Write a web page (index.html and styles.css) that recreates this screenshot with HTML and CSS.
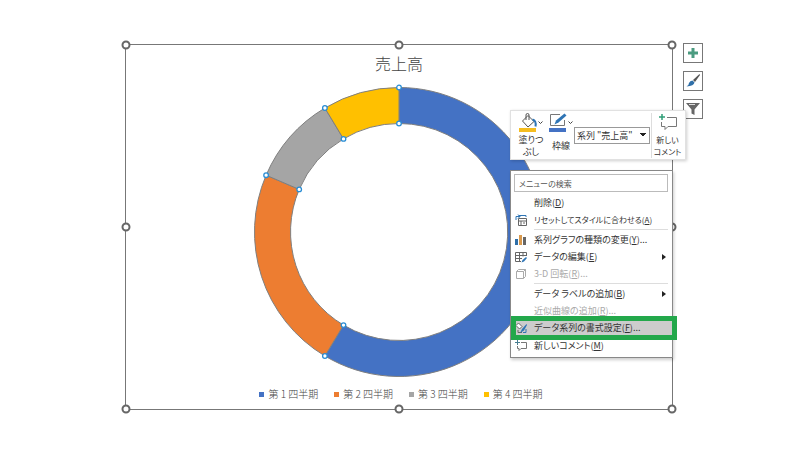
FILE: index.html
```
<!DOCTYPE html>
<html lang="ja">

<head>
    <meta charset="UTF-8">
    <meta name="viewport" content="width=device-width, initial-scale=1.0">
    <title>売上高</title>
    <link rel="stylesheet" href="styles.css">
</head>
<body>
    <main class="slide">
        <section class="chart">
            <h1 class="chart-title">売上高</h1>
            <svg class="donut" viewBox="0 0 290 290" role="img" aria-label="売上高">
                <g stroke="#7f7f7f" stroke-width="1">
                    <path fill="#4472c4" d="M145 .5A144.5 144.5 0 1 1 70.9 269L89.5 238.1A108.5 108.5 0 1 0 145 36.5Z"/>
                    <path fill="#ed7d31" d="M70.9 269A144.5 144.5 0 0 1 12.1 88.2L45.2 102.4A108.5 108.5 0 0 0 89.5 238.1Z"/>
                    <path fill="#a5a5a5" d="M12.1 88.2A144.5 144.5 0 0 1 70.9 21L89.5 51.9A108.5 108.5 0 0 0 45.2 102.4Z"/>
                    <path fill="#ffc000" d="M70.9 21A144.5 144.5 0 0 1 145 .5L145 36.5A108.5 108.5 0 0 0 89.5 51.9Z"/>
                </g>
                <g fill="#fff" stroke="#2a8dd4" stroke-width="1.3">
                    <circle cx="145" cy=".5" r="2.3"/>
                    <circle cx="145" cy="36.5" r="2.3"/>
                    <circle cx="70.9" cy="21" r="2.3"/>
                    <circle cx="89.5" cy="51.9" r="2.3"/>
                    <circle cx="12.1" cy="88.2" r="2.3"/>
                    <circle cx="45.2" cy="102.4" r="2.3"/>
                    <circle cx="89.5" cy="238.1" r="2.3"/>
                    <circle cx="70.9" cy="269" r="2.3"/>
                </g>
            </svg>
            <ul class="legend">
                <li class="q1">第 1 四半期</li>
                <li class="q2">第 2 四半期</li>
                <li class="q3">第 3 四半期</li>
                <li class="q4">第 4 四半期</li>
            </ul>

            <span class="handle top left"></span>
            <span class="handle top center"></span>
            <span class="handle top right"></span>
            <span class="handle middle left"></span>
            <span class="handle middle right"></span>
            <span class="handle bottom left"></span>
            <span class="handle bottom center"></span>
            <span class="handle bottom right"></span>

            <div class="popup">
                <div class="toolbar">
                    <button class="tool">
                        <svg width="26" height="19" viewBox="0 0 26 19" fill="none">
                            <path d="M4.500 8 10 2.500l6 6-6 5.500-5.500-6Z" fill="#fff" stroke="#555"/>
                            <path d="M8 7V2q0-1.500 1.500-1.500T11 2v5" stroke="#555"/>
                            <path d="M14.500 6.500q4 1 3 7" stroke="#2f75b5" stroke-width="2"/>
                            <path d="M1 15h17v4H1z" fill="#f5bd1f"/>
                            <path d="m20.500 8.500 2 2 2-2" stroke="#444"/>
                        </svg>
                        <span>塗りつ<br>ぶし</span>
                    </button>
                    <button class="tool">
                        <svg width="26" height="19" viewBox="0 0 26 19" fill="none">
                            <path d="M12 1.500H2.500v11h14V7" stroke="#777"/>
                            <path d="m6.500 11.500 1.500-4 8.500-7 2 2-8 7-4 2Z" fill="#2f75b5"/>
                            <path d="M1 15h17v4H1z" fill="#4472c4"/>
                            <path d="m20.500 8.500 2 2 2-2" stroke="#444"/>
                        </svg>
                        <span class="one-line">枠線</span>
                    </button>
                    <select class="series" aria-label="グラフ要素">
                        <option>系列 "売上高"</option>
                    </select>
                    <button class="tool comment">
                        <svg width="20" height="19" viewBox="0 0 20 19" fill="none">
                            <path d="M9 4.500h9.500v9H10l-3 3v-3H3.500V9" stroke="#777"/>
                            <path d="M4 1v6M1 4h6" stroke="#2f9e77" stroke-width="1.500"/>
                        </svg>
                        <span class="dense">新しい<br>コメント</span>
                    </button>
                </div>

                <div class="menu">
                    <input class="search dense" type="text" placeholder="メニューの検索" aria-label="メニューの検索">
                    <button class="item"><span class="label">削除(<u>D</u>)</span></button>
                    <button class="item">
                        <svg class="icon" viewBox="0 0 12 12" fill="none">
                            <path d="M3.500 4.500h8v7h-8zM3.500 7h8M6 7v4.500M8 9h2" stroke="#666"/>
                            <path d="M11 3V1.500H3.500M1 6V2.500h4M3 .5l2 2-2 2" stroke="#2f75b5"/>
                        </svg>
                        <span class="label dense">リセットしてスタイルに合わせる(<u>A</u>)</span>
                    </button>
                    <hr class="line">
                    <button class="item">
                        <svg class="icon" viewBox="0 0 12 12">
                            <path d="M0 5h3v6H0z" fill="#2f6fa8"/>
                            <path d="M4 1h3v10H4z" fill="#d99a4e"/>
                            <path d="M8 3h3v8H8z" fill="#666"/>
                        </svg>
                        <span class="label">系列グラフの種類の変更(<u>Y</u>)...</span>
                    </button>
                    <button class="item">
                        <svg class="icon" viewBox="0 0 12 12" fill="none">
                            <path d="M6 10.500H.5v-9h11V5M.5 4.500h11M.5 7.500H7M4.500 1.500v9M8 1.500v4" stroke="#666"/>
                            <path d="m6.500 11.500 1-2.500 3.500-3 1 1-3 3.500Z" fill="#2f75b5"/>
                        </svg>
                        <span class="label">データの編集(<u>E</u>)</span>
                        <span class="arrow"></span>
                    </button>
                    <button class="item" disabled>
                        <svg class="icon" viewBox="0 0 12 12" fill="none">
                            <path d="M1.500 3.500h7v7h-7zM1.500 3.500l2-2h7v7l-2 2M8.500 3.500l2-2" stroke="#aaa"/>
                        </svg>
                        <span class="label">3-D 回転(<u>R</u>)...</span>
                    </button>
                    <hr class="line">
                    <button class="item">
                        <span class="label">データ ラベルの追加(<u>B</u>)</span>
                        <span class="arrow"></span>
                    </button>
                    <button class="item" disabled><span class="label">近似曲線の追加(<u>R</u>)...</span></button>
                    <button class="item selected">
                        <svg class="icon" viewBox="0 0 12 12" fill="none">
                            <path d="M1 3.500 3.500 1 7 4.500 4.500 7Z" fill="#fff" stroke="#666"/>
                            <path d="M3 8v2.500h4" stroke="#666"/>
                            <path d="m5 11 2-4 4.500-5 .5 1-3 5.500Z" fill="#2f75b5"/>
                            <path d="M8 10.500h3V7" stroke="#2f75b5"/>
                        </svg>
                        <span class="label">データ系列の書式設定(<u>F</u>)...</span>
                    </button>
                    <button class="item">
                        <svg class="icon" viewBox="0 0 12 12" fill="none">
                            <path d="M6 2.500h5.500v6H6l-2 2v-2H2.500V6" stroke="#777"/>
                            <path d="M2.500 0v5M0 2.500h5" stroke="#4a7f92"/>
                        </svg>
                        <span class="label">新しいコメント(<u>M</u>)</span>
                    </button>
                </div>
            </div>
        </section>

        <div class="side">
            <button class="side-btn" aria-label="グラフ要素">
                <svg width="14" height="14" viewBox="0 0 14 14"><path d="M5.500 2h3v3.500H12v3H8.500V12h-3V8.500H2v-3h3.500z" fill="#4b9b80"/></svg>
            </button>
            <button class="side-btn" aria-label="グラフ スタイル">
                <svg width="14" height="14" viewBox="0 0 14 14">
                    <path d="M13.500 0 14 1 9 8 7 6Z" fill="#555"/>
                    <path d="M6.500 6.500 8.500 8.500Q8 12 .5 12.500 3 11 3 9 4 6.500 6.500 6.500Z" fill="#2f6fa8"/>
                </svg>
            </button>
            <button class="side-btn" aria-label="グラフ フィルター">
                <svg width="14" height="14" viewBox="0 0 14 14" fill="none">
                    <path d="M0 1h14L8.500 7.500V13l-3-1.500v-4Z" fill="#666"/>
                    <path d="M3 2.500h6" stroke="#ddd"/>
                </svg>
            </button>
        </div>
    </main>
</body>
</html>
```
FILE: styles.css
```
* {
    box-sizing: border-box;
}

body {
    margin: 0;
    background-color: #fff;
    color: #333;
    font-family: "Noto Sans CJK JP", sans-serif;
}

button {
    padding: 0;
    border: none;
    background: none;
    color: inherit;
    font: inherit;
}

.slide {
    display: flex;
    align-items: flex-start;
    gap: 10px;
    padding: 43px 104px 43px 125px;
}

/* chart */
.chart {
    position: relative;
    flex: 1;
    display: flex;
    flex-direction: column;
    align-items: center;
    margin-top: 1px;
    padding: 6px 0;
    border: 1px solid #777;
}

.chart-title {
    margin: 0 0 12px;
    font-size: 16px;
    font-weight: 300;
    line-height: 24px;
    color: #444;
}

.donut {
    width: 290px;
    height: 290px;
    overflow: visible;
}

.legend {
    display: flex;
    gap: 16px;
    margin: 8px 0 0;
    padding: 0 0 0 4px;
    list-style: none;
    font-size: 10px;
    font-weight: 300;
    line-height: 18px;
    color: #444;
}

.legend li {
    display: flex;
    align-items: center;
    gap: 4px;
}

.legend li::before {
    content: "";
    width: 5px;
    height: 5px;
    background-color: #4472c4;
}

.legend .q2::before {
    background-color: #ed7d31;
}

.legend .q3::before {
    background-color: #a5a5a5;
}

.legend .q4::before {
    background-color: #ffc000;
}

/* selection handles on the chart frame */
.handle {
    position: absolute;
    width: 9px;
    height: 9px;
    border: 2px solid #666;
    border-radius: 50%;
    background-color: #fff;
    transform: translate(-50%, -50%);
}

.top { top: 0; }
.middle { top: 50%; }
.bottom { top: 100%; }
.left { left: 0; }
.center { left: 50%; }
.right { left: 100%; }

/* mini toolbar and context menu */
.popup {
    position: absolute;
    top: 65px;
    right: -14px;
    display: flex;
    flex-direction: column;
    gap: 10px;
    width: 176px;
    font-size: 9px;
    font-feature-settings: "palt";
}

.toolbar {
    display: flex;
    align-items: center;
    height: 50px;
    padding: 0 2px 0 5px;
    border: 1px solid #e1e1e1;
    background-color: #fff;
    box-shadow: 1px 1px 3px rgba(0, 0, 0, 0.2);
}

.tool {
    display: flex;
    flex-direction: column;
    align-items: center;
    gap: 2px;
    width: 30px;
    line-height: 12px;
}

.tool span {
    min-height: 24px;
    white-space: nowrap;
}

.tool .one-line {
    line-height: 24px;
}

.series {
    flex: 1;
    min-width: 0;
    height: 17px;
    margin: 0 1px 0 -2px;
    padding: 0 0 0 2px;
    border: 1px solid #999;
    border-radius: 0;
    appearance: none;
    background-color: #fff;
    background-image: linear-gradient(to bottom left, #222 50%, transparent 50%),
        linear-gradient(to bottom right, #222 50%, transparent 50%);
    background-position: right 6px center, right 3px center;
    background-size: 3px 4px;
    background-repeat: no-repeat;
    color: #333;
    font: inherit;
}

.comment {
    width: 32px;
    border-left: 1px solid #ddd;
}

.menu {
    width: 163px;
    padding: 3px 0;
    border: 1px solid #888;
    background-color: #fff;
    box-shadow: 1px 2px 3px rgba(0, 0, 0, 0.2);
}

.search {
    display: block;
    width: calc(100% - 7px);
    height: 18px;
    margin: 0 3px 2px;
    padding: 0 4px;
    border: 1px solid #bbb;
    font: inherit;
    font-feature-settings: inherit;
}

.search::placeholder {
    color: #555;
}

.item {
    position: relative;
    display: flex;
    align-items: center;
    width: 100%;
    height: 17px;
    padding: 0 6px 0 23px;
    line-height: 17px;
    text-align: left;
    white-space: nowrap;
}

.item:disabled {
    color: #aaa;
}

.icon {
    flex-shrink: 0;
    width: 12px;
    height: 12px;
    margin-left: -19px;
    margin-right: 7px;
}

.label {
    flex: 1;
}

.dense {
    font-size: 8px;
}

u {
    text-underline-offset: 1px;
}

.arrow {
    border: 3px solid transparent;
    border-left: 4px solid #222;
    border-right: 0;
}

.line {
    height: 1px;
    margin: 1px 4px 1px 23px;
    border: none;
    background-color: #ddd;
}

.selected {
    margin-bottom: 1px;
    background-color: #ccc;
}

.selected::after {
    content: "";
    position: absolute;
    inset: -3px -5px -4px 0;
    border: 5px solid #23a84b;
}

/* chart buttons */
.side {
    display: flex;
    flex-direction: column;
    gap: 8px;
}

.side-btn {
    display: flex;
    align-items: center;
    justify-content: center;
    width: 20px;
    height: 20px;
    border: 1px solid #777;
    background-color: #fff;
}
```
